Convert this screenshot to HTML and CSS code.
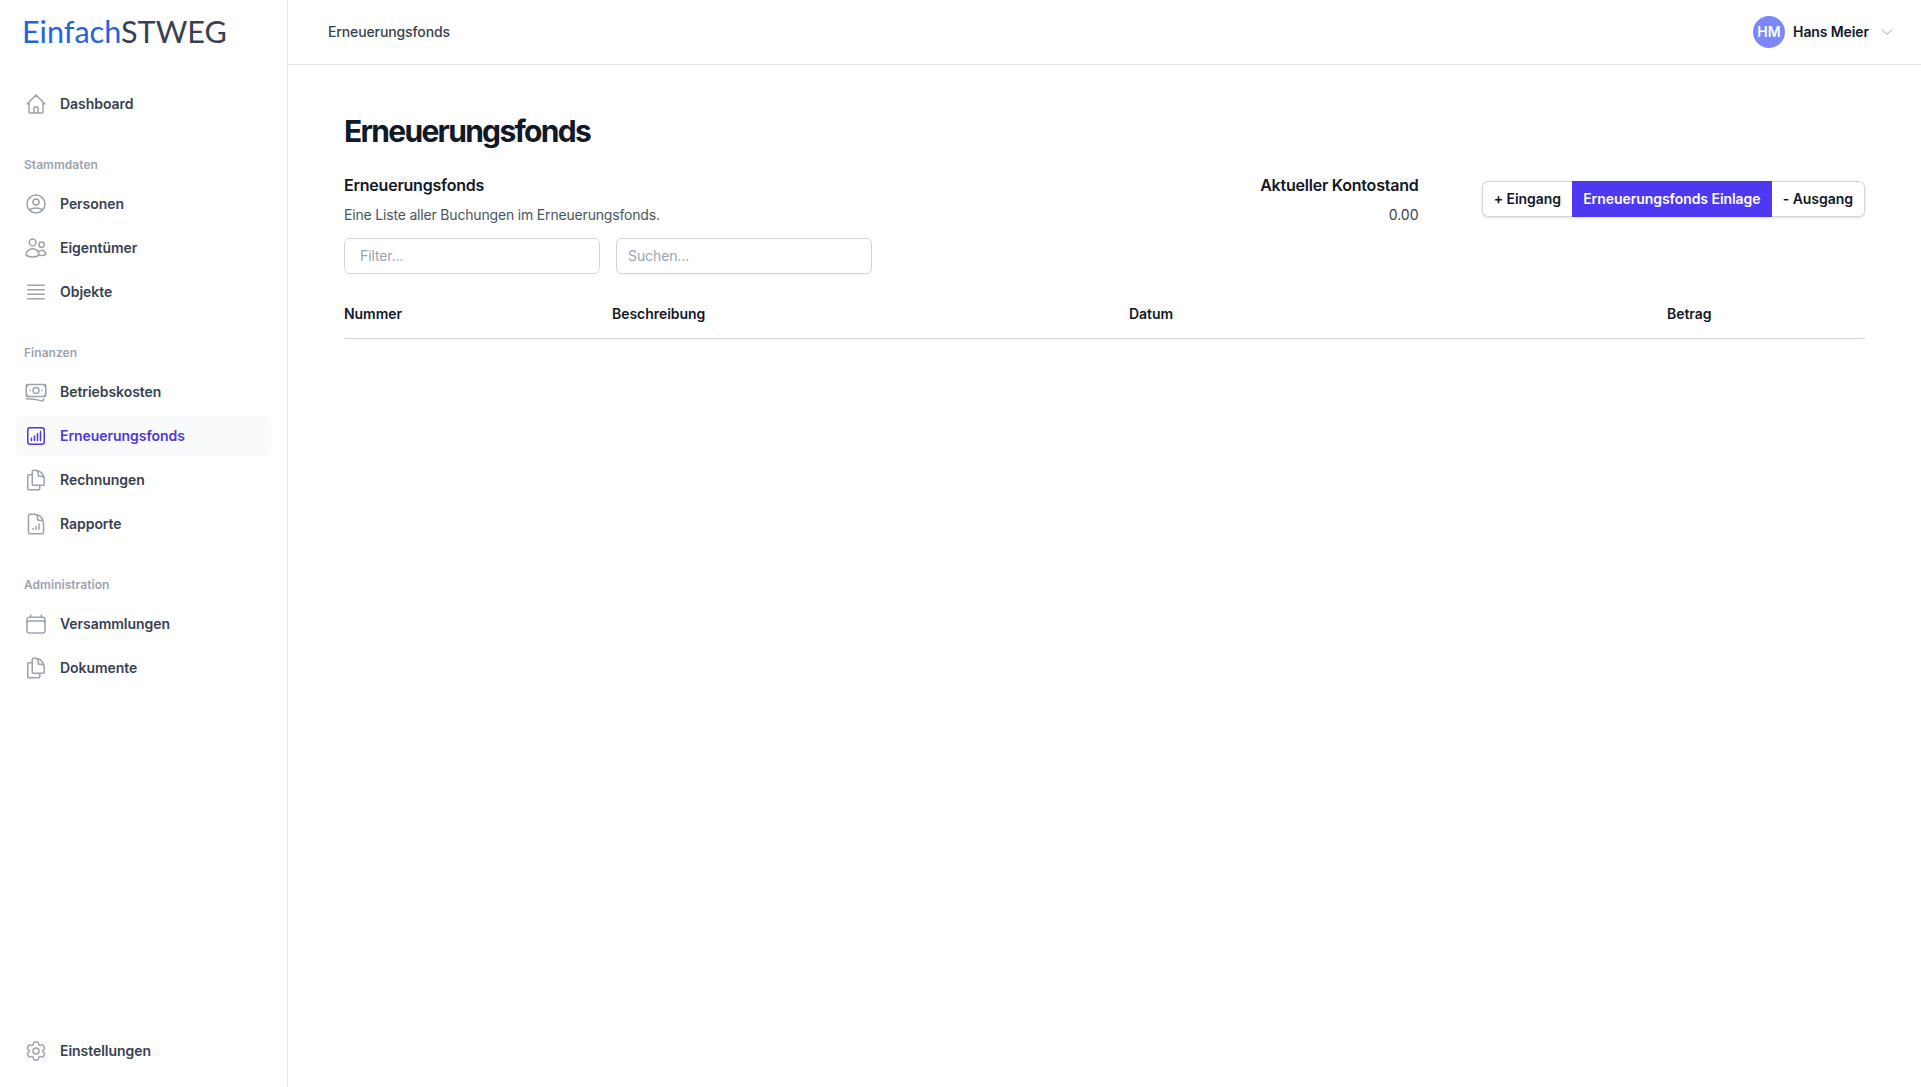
FILE: index.html
```html
<!DOCTYPE html>
<html lang="de">
<head>
<meta charset="utf-8">
<title>Erneuerungsfonds</title>
<link rel="stylesheet" href="styles.css">
</head>
<body>
<div class="app">
  <aside class="sidebar">
    <div class="logo"><span class="logo-a">Einfach</span><span class="logo-b">STWEG</span></div>
    <nav class="nav">
      <div class="nav-group">
        <a class="nav-item"><svg class="icon" viewBox="0 0 24 24"><path d="M3 12l2-2m0 0l7-7 7 7M5 10v10a1 1 0 001 1h3m10-11l2 2m-2-2v10a1 1 0 01-1 1h-3m-6 0a1 1 0 001-1v-4a1 1 0 011-1h2a1 1 0 011 1v4a1 1 0 001 1m-6 0h6"/></svg>Dashboard</a>
      </div>
      <div class="nav-group">
        <div class="nav-label">Stammdaten</div>
        <a class="nav-item"><svg class="icon" viewBox="0 0 24 24"><path d="M5.121 17.804A13.937 13.937 0 0112 16c2.5 0 4.847.655 6.879 1.804M15 10a3 3 0 11-6 0 3 3 0 016 0zm6 2a9 9 0 11-18 0 9 9 0 0118 0z"/></svg>Personen</a>
        <a class="nav-item"><svg class="icon" viewBox="0 0 24 24"><path d="M15 19.128a9.38 9.38 0 002.625.372 9.337 9.337 0 004.121-.952 4.125 4.125 0 00-7.533-2.493M15 19.128v-.003c0-1.113-.285-2.16-.786-3.07M15 19.128v.106A12.318 12.318 0 018.624 21c-2.331 0-4.512-.645-6.374-1.766l-.001-.109a6.375 6.375 0 0111.964-3.07M12 6.375a3.375 3.375 0 11-6.75 0 3.375 3.375 0 016.75 0zm8.25 2.25a2.625 2.625 0 11-5.25 0 2.625 2.625 0 015.25 0z"/></svg>Eigentümer</a>
        <a class="nav-item"><svg class="icon" viewBox="0 0 24 24"><path d="M3.75 5.25h16.5m-16.5 4.5h16.5m-16.5 4.5h16.5m-16.5 4.5h16.5"/></svg>Objekte</a>
      </div>
      <div class="nav-group">
        <div class="nav-label">Finanzen</div>
        <a class="nav-item"><svg class="icon" viewBox="0 0 24 24"><path d="M2.25 18.75a60.07 60.07 0 0115.797 2.101c.727.198 1.453-.342 1.453-1.096V18.75M3.75 4.5v.75A.75.75 0 013 6h-.75m0 0v-.375c0-.621.504-1.125 1.125-1.125H20.25M2.25 6v9m18-10.5v.75c0 .414.336.75.75.75h.75m-1.5-1.5h.375c.621 0 1.125.504 1.125 1.125v9.75c0 .621-.504 1.125-1.125 1.125h-.375m1.5-1.5H21a.75.75 0 00-.75.75v.75m0 0H3.75m0 0h-.375a1.125 1.125 0 01-1.125-1.125V15m1.5 1.5v-.75A.75.75 0 003 15h-.75M15 10.5a3 3 0 11-6 0 3 3 0 016 0zm3 0h.008v.008H18V10.5zm-12 0h.008v.008H6V10.5z"/></svg>Betriebskosten</a>
        <a class="nav-item active"><svg class="icon" viewBox="0 0 24 24"><path d="M7.5 14.25v2.25m3-4.5v4.5m3-6.75v6.75m3-9v9M6 20.25h12A2.25 2.25 0 0020.25 18V6A2.25 2.25 0 0018 3.75H6A2.25 2.25 0 003.75 6v12A2.25 2.25 0 006 20.25z"/></svg>Erneuerungsfonds</a>
        <a class="nav-item"><svg class="icon" viewBox="0 0 24 24"><path d="M15.75 17.25v3.375c0 .621-.504 1.125-1.125 1.125h-9.75a1.125 1.125 0 01-1.125-1.125V7.875c0-.621.504-1.125 1.125-1.125H6.75a9.06 9.06 0 011.5.124m7.5 10.376h3.375c.621 0 1.125-.504 1.125-1.125V11.25c0-4.46-3.243-8.161-7.5-8.876a9.06 9.06 0 00-1.5-.124H9.375c-.621 0-1.125.504-1.125 1.125v3.5m7.5 10.375H9.375a1.125 1.125 0 01-1.125-1.125v-9.25m12 6.625v-1.875a3.375 3.375 0 00-3.375-3.375h-1.5a1.125 1.125 0 01-1.125-1.125v-1.5a3.375 3.375 0 00-3.375-3.375H9.75"/></svg>Rechnungen</a>
        <a class="nav-item"><svg class="icon" viewBox="0 0 24 24"><path d="M19.5 14.25v-2.625a3.375 3.375 0 00-3.375-3.375h-1.5A1.125 1.125 0 0113.5 7.125v-1.5a3.375 3.375 0 00-3.375-3.375H8.25M9 16.5v.75m3-3v3M15 12v5.25m-4.5-15H5.625c-.621 0-1.125.504-1.125 1.125v17.25c0 .621.504 1.125 1.125 1.125h12.75c.621 0 1.125-.504 1.125-1.125V11.25a9 9 0 00-9-9z"/></svg>Rapporte</a>
      </div>
      <div class="nav-group">
        <div class="nav-label">Administration</div>
        <a class="nav-item"><svg class="icon" viewBox="0 0 24 24"><path d="M6.75 3v2.25M17.25 3v2.25M3 18.75V7.5a2.25 2.25 0 012.25-2.25h13.5A2.25 2.25 0 0121 7.5v11.25m-18 0A2.25 2.25 0 005.25 21h13.5A2.25 2.25 0 0021 18.75m-18 0v-7.5A2.25 2.25 0 015.25 9h13.5A2.25 2.25 0 0121 11.25v7.5"/></svg>Versammlungen</a>
        <a class="nav-item"><svg class="icon" viewBox="0 0 24 24"><path d="M15.75 17.25v3.375c0 .621-.504 1.125-1.125 1.125h-9.75a1.125 1.125 0 01-1.125-1.125V7.875c0-.621.504-1.125 1.125-1.125H6.75a9.06 9.06 0 011.5.124m7.5 10.376h3.375c.621 0 1.125-.504 1.125-1.125V11.25c0-4.46-3.243-8.161-7.5-8.876a9.06 9.06 0 00-1.5-.124H9.375c-.621 0-1.125.504-1.125 1.125v3.5m7.5 10.375H9.375a1.125 1.125 0 01-1.125-1.125v-9.25m12 6.625v-1.875a3.375 3.375 0 00-3.375-3.375h-1.5a1.125 1.125 0 01-1.125-1.125v-1.5a3.375 3.375 0 00-3.375-3.375H9.75"/></svg>Dokumente</a>
      </div>
    </nav>
    <a class="nav-item"><svg class="icon" viewBox="0 0 24 24"><path d="M9.594 3.94c.09-.542.56-.94 1.11-.94h2.593c.55 0 1.02.398 1.11.94l.213 1.281c.063.374.313.686.645.87.074.04.147.083.22.127.324.196.72.257 1.075.124l1.217-.456a1.125 1.125 0 011.37.49l1.296 2.247a1.125 1.125 0 01-.26 1.431l-1.003.827c-.293.24-.438.613-.431.992a6.759 6.759 0 010 .255c-.007.378.138.75.43.99l1.005.828c.424.35.534.954.26 1.43l-1.298 2.247a1.125 1.125 0 01-1.369.491l-1.217-.456c-.355-.133-.75-.072-1.076.124a6.57 6.57 0 01-.22.128c-.331.183-.581.495-.644.869l-.213 1.28c-.09.543-.56.941-1.11.941h-2.594c-.55 0-1.02-.398-1.11-.94l-.213-1.281c-.062-.374-.312-.686-.644-.87a6.52 6.52 0 01-.22-.127c-.325-.196-.72-.257-1.076-.124l-1.217.456a1.125 1.125 0 01-1.369-.49l-1.297-2.247a1.125 1.125 0 01.26-1.431l1.004-.827c.292-.24.437-.613.43-.992a6.932 6.932 0 010-.255c.007-.378-.138-.75-.43-.99l-1.004-.828a1.125 1.125 0 01-.26-1.43l1.297-2.247a1.125 1.125 0 011.37-.491l1.216.456c.356.133.751.072 1.076-.124.072-.044.146-.087.22-.128.332-.183.582-.495.644-.869l.214-1.281z"/><path d="M15 12a3 3 0 11-6 0 3 3 0 016 0z"/></svg>Einstellungen</a>
  </aside>
  <div class="content">
    <header class="topbar">
      <div class="crumb">Erneuerungsfonds</div>
      <div class="user">
        <span class="avatar">HM</span>
        <span class="user-name">Hans Meier</span>
        <svg class="chevron" viewBox="0 0 24 24"><path d="M19.5 8.25l-7.5 7.5-7.5-7.5"/></svg>
      </div>
    </header>
    <main class="main">
      <h1 class="page-title">Erneuerungsfonds</h1>
      <section class="head">
        <div class="head-left">
          <h2 class="section-title">Erneuerungsfonds</h2>
          <p class="section-desc">Eine Liste aller Buchungen im Erneuerungsfonds.</p>
          <div class="filters">
            <input class="field field-filter" placeholder="Filter...">
            <input class="field field-search" placeholder="Suchen...">
          </div>
        </div>
        <div class="balance">
          <h2 class="section-title">Aktueller Kontostand</h2>
          <p class="balance-value">0.00</p>
        </div>
        <div class="btn-group">
          <button class="btn btn-first">+ Eingang</button>
          <button class="btn btn-primary">Erneuerungsfonds Einlage</button>
          <button class="btn btn-last">- Ausgang</button>
        </div>
      </section>
      <div class="table-head">
        <div>Nummer</div>
        <div>Beschreibung</div>
        <div>Datum</div>
        <div>Betrag</div>
      </div>
    </main>
  </div>
</div>
</body>
</html>
```
FILE: styles.css
```css
* { box-sizing: border-box; }
html, body { margin: 0; height: 100%; }
body {
  font-family: Inter, "Noto Sans", sans-serif;
  font-size: 14px;
  line-height: 20px;
  color: #111827;
  background: #fff;
}
.app { display: flex; height: 1087px; overflow: hidden; }

.sidebar {
  width: 288px;
  flex: none;
  display: flex;
  flex-direction: column;
  border-right: 1px solid #e5e7eb;
  padding: 0 16px 16px;
}
.logo {
  height: 64px;
  margin-left: 6px;
  font-family: Lato, sans-serif;
  font-size: 30.6px;
  line-height: 64px;
  white-space: nowrap;
}
.logo-a { color: #2563d9; }
.logo-b { color: #374151; }
.nav { flex: 1; padding-top: 20px; display: flex; flex-direction: column; gap: 32px; }
.nav-group { display: flex; flex-direction: column; gap: 4px; }
.nav-label {
  font-size: 12px;
  line-height: 16px;
  font-weight: 600;
  letter-spacing: 0.04px;
  color: #9ca3af;
  padding-left: 8px;
  padding-top: 1px;
  margin-bottom: 7px;
}
.nav-item {
  display: flex;
  align-items: center;
  gap: 12px;
  height: 40px;
  padding: 0 8px;
  border-radius: 6px;
  font-weight: 600;
  letter-spacing: -0.05px;
  color: #374151;
}
.icon {
  width: 24px;
  height: 24px;
  flex: none;
  fill: none;
  stroke: #9ca3af;
  stroke-width: 1.5;
  stroke-linecap: round;
  stroke-linejoin: round;
}
.nav-item.active { background: #f9fafb; color: #4f39d6; }
.nav-item.active .icon { stroke: #4f39d6; }

.content { flex: 1; min-width: 0; display: flex; flex-direction: column; }
.topbar {
  height: 65px;
  flex: none;
  display: flex;
  align-items: center;
  justify-content: space-between;
  padding: 0 26px 0 40px;
  border-bottom: 1px solid #e5e7eb;
}
.crumb { font-weight: 500; color: #374151; letter-spacing: -0.12px; }
.user { display: flex; align-items: center; }
.avatar {
  width: 32px;
  height: 32px;
  border-radius: 50%;
  background: #7c87fb;
  color: #fff;
  font-weight: 600;
  display: flex;
  align-items: center;
  justify-content: center;
  margin-right: 8px;
}
.user-name { font-weight: 600; color: #111827; letter-spacing: -0.1px; }
.chevron {
  width: 16px;
  height: 16px;
  margin-left: 10px;
  fill: none;
  stroke: #9ca3af;
  stroke-width: 1.5;
  stroke-linecap: round;
  stroke-linejoin: round;
}

.main { flex: 1; padding: 48px 56px 0; }
.page-title {
  margin: 0;
  font-size: 30px;
  line-height: 36px;
  font-weight: 700;
  letter-spacing: -1.69px;
  color: #111827;
}
.head { display: flex; margin-top: 24px; }
.head-left { flex: 1; }
.section-title {
  margin: 0;
  font-size: 16px;
  line-height: 24px;
  font-weight: 600;
  letter-spacing: -0.22px;
  color: #111827;
}
.section-desc { margin: 8px 0 0; color: #4b5563; letter-spacing: -0.18px; }
.filters { display: flex; gap: 16px; margin-top: 13px; }
.field {
  width: 256px;
  height: 36px;
  border: 1px solid #d1d5db;
  border-radius: 6px;
  background: #fff;
  font: inherit;
  letter-spacing: -0.1px;
  outline: none;
}
.field::placeholder { color: #9ca3af; opacity: 1; }
.field-filter { padding: 0 15px 1px; }
.field-search { padding: 0 11px 1px; box-shadow: 0 1px 2px rgba(0,0,0,.05); }
.balance { text-align: right; margin-right: 63px; }
.balance-value { margin: 8px 0 0; color: #374151; }
.btn-group {
  display: flex;
  align-self: flex-start;
  height: 36px;
  margin-top: 8px;
  border-radius: 6px;
  box-shadow: 0 1px 3px rgba(0,0,0,.12);
}
.btn {
  border: 1px solid #d1d5db;
  background: #fff;
  padding: 0 11.1px;
  font: inherit;
  font-weight: 600;
  letter-spacing: -0.05px;
  color: #111827;
}
.btn-first { border-right: 0; border-radius: 6px 0 0 6px; }
.btn-last { border-left: 0; border-radius: 0 6px 6px 0; }
.btn-primary { border: 0; background: #4f39f0; color: #fff; }

.table-head {
  display: grid;
  grid-template-columns: 268px 517px 538px 1fr;
  margin-top: 30px;
  padding-bottom: 14px;
  border-bottom: 1px solid #d1d5db;
  font-weight: 600;
  letter-spacing: -0.04px;
  color: #111827;
}
```
